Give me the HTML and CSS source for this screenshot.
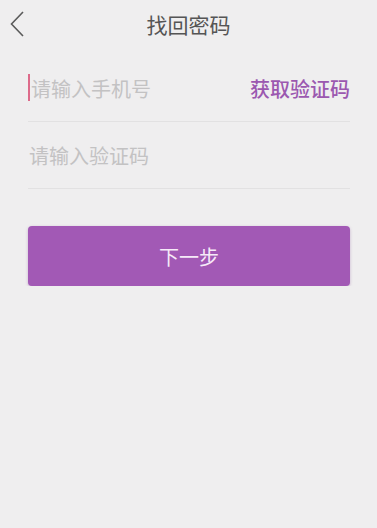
FILE: index.html
```html
<!DOCTYPE html>
<html lang="zh-CN">

<head>
    <meta charset="UTF-8">
    <meta name="viewport" content="width=device-width, initial-scale=1.0">
    <title>找回密码</title>
    <link rel="stylesheet" href="styles.css">
</head>

<body>

    <div class="header">
        <a class="back" href="#">
            <svg width="16" height="28" viewBox="0 0 16 28">
                <polyline points="14,2 2.5,14 14,26" fill="none" stroke="#5a5a5a" stroke-width="1.6" />
            </svg>
        </a>
        <h1>找回密码</h1>
    </div>

    <div class="form">
        <div class="row">
            <span class="caret"></span>
            <input type="tel" placeholder="请输入手机号">
            <button class="code-btn">获取验证码</button>
        </div>
        <div class="row">
            <input type="text" placeholder="请输入验证码">
        </div>

        <button class="next">下一步</button>
    </div>

</body>

</html>
```

FILE: styles.css
```css
* {
    box-sizing: border-box;
}

body {
    margin: 0;
    background-color: #efeeef;
    font-family: 'Noto Sans CJK SC', 'Noto Sans', sans-serif;
    color: #555;
}

.header {
    height: 48px;
    display: flex;
    align-items: center;
    justify-content: center;
    position: relative;
}

.header h1 {
    margin: 0;
    font-size: 21px;
    font-weight: normal;
    color: #555;
}

.back {
    position: absolute;
    left: 9px;
    top: 10px;
    display: block;
    line-height: 0;
}

.form {
    padding: 7px 27px 0 28px;
}

.row {
    height: 67px;
    display: flex;
    align-items: center;
    border-bottom: 1px solid #e2e1e2;
}

.caret {
    width: 2px;
    height: 27px;
    margin-top: -2px;
    background-color: #dd6a8a;
    flex-shrink: 0;
}

.row input {
    flex: 1;
    min-width: 0;
    border: none;
    background: transparent;
    outline: none;
    padding: 0 0 0 1px;
    font-family: inherit;
    font-size: 20px;
    color: #444;
}

.row input::placeholder {
    color: #c3c2c3;
}

.code-btn {
    border: none;
    background: transparent;
    padding: 0;
    font-family: inherit;
    font-size: 20px;
    font-weight: 500;
    color: #9b58b0;
}

.next {
    display: block;
    width: 100%;
    height: 60px;
    margin-top: 37px;
    border: none;
    border-radius: 4px;
    background-color: #a259b5;
    color: #f6eaf8;
    font-family: inherit;
    font-size: 20px;
    box-shadow: 0 1px 3px rgba(120, 60, 140, 0.35);
}
```
